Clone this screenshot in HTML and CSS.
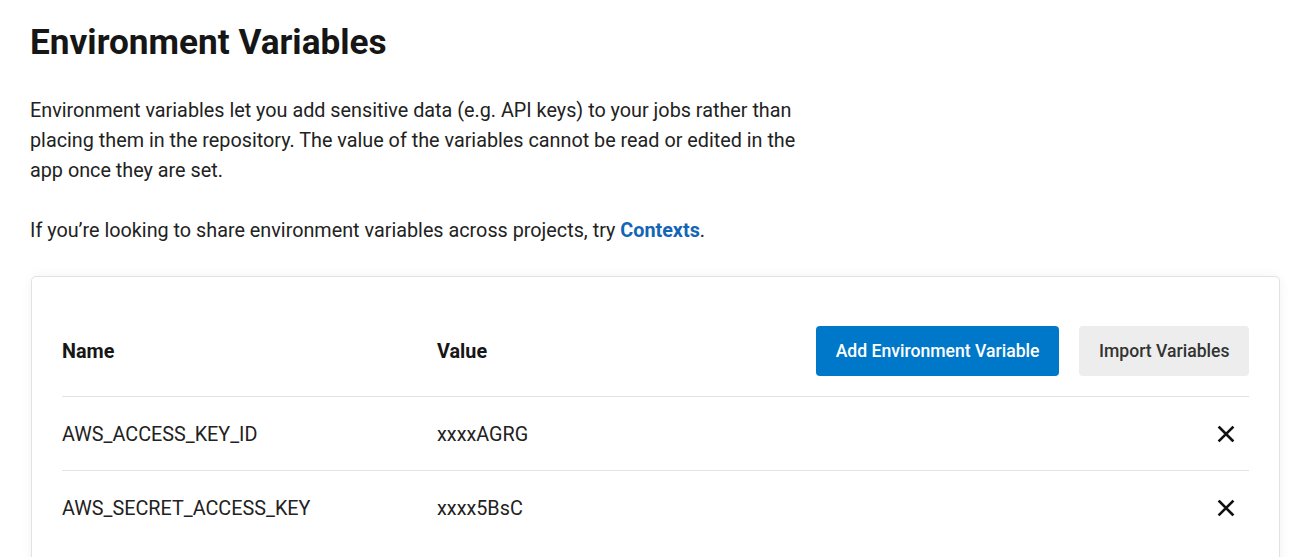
FILE: index.html
```html
<!DOCTYPE html>
<html lang="en">
<head>
<meta charset="utf-8">
<title>Environment Variables</title>
<link rel="stylesheet" href="styles.css">
</head>
<body>
<main class="page">
  <h1 class="title">Environment Variables</h1>
  <p class="intro">Environment variables let you add sensitive data (e.g. API keys) to your jobs rather than placing them in the repository. The value of the variables cannot be read or edited in the app once they are set.</p>
  <p class="intro">If you’re looking to share environment variables across projects, try <a class="link" href="#">Contexts</a>.</p>

  <section class="card">
    <div class="table">
      <div class="row head">
        <div class="cell name">Name</div>
        <div class="cell value">Value</div>
        <div class="cell actions">
          <button class="btn primary">Add Environment Variable</button>
          <button class="btn secondary">Import Variables</button>
        </div>
      </div>
      <div class="row">
        <div class="cell name">AWS_ACCESS_KEY_ID</div>
        <div class="cell value">xxxxAGRG</div>
        <div class="cell actions">
          <button class="remove" aria-label="Delete">
            <svg width="18" height="18" viewBox="0 0 18 18"><path d="M2.5 2.5L15.5 15.5M15.5 2.5L2.5 15.5" stroke="#111" stroke-width="2.6" stroke-linecap="square" fill="none"/></svg>
          </button>
        </div>
      </div>
      <div class="row">
        <div class="cell name">AWS_SECRET_ACCESS_KEY</div>
        <div class="cell value">xxxx5BsC</div>
        <div class="cell actions">
          <button class="remove" aria-label="Delete">
            <svg width="18" height="18" viewBox="0 0 18 18"><path d="M2.5 2.5L15.5 15.5M15.5 2.5L2.5 15.5" stroke="#111" stroke-width="2.6" stroke-linecap="square" fill="none"/></svg>
          </button>
        </div>
      </div>
    </div>
  </section>
</main>
</body>
</html>
```

FILE: styles.css
```css
* { box-sizing: border-box; }
html, body { margin: 0; padding: 0; background: #fff; }
body {
  font-family: Roboto, "Liberation Sans", Arial, sans-serif;
  color: #161616;
}
.page {
  padding: 24px 31px 0 30px;
}
.title {
  margin: 0;
  font-size: 35.2px;
  font-weight: 700;
  line-height: 37px;
  color: #161616;
}
.intro {
  margin: 35px 0 0;
  max-width: 790px;
  font-size: 19.8px;
  line-height: 30px;
  color: #222;
}
.intro + .intro { margin-top: 30px; }
.link {
  color: #1366b3;
  font-weight: 700;
  text-decoration: none;
}
.card {
  margin-top: 30px;
  margin-left: 1px;
  border: 1px solid #e2e2e2;
  border-radius: 5px;
  box-shadow: 0 0 12px rgba(0, 0, 0, 0.05);
  padding: 49px 30px 40px;
  background: #fff;
}
.row {
  display: grid;
  grid-template-columns: 375px 1fr auto;
  align-items: center;
  height: 74px;
  border-top: 1px solid #e3e3e3;
  font-size: 19.8px;
  color: #222;
}
.row .cell.name, .row .cell.value { padding-top: 2px; }
.row.head {
  border-top: none;
  height: 70px;
  align-items: start;
  font-weight: 700;
  color: #161616;
}
.row.head .cell.name, .row.head .cell.value { line-height: 50px; padding-top: 1px; }
.actions {
  display: flex;
  justify-content: flex-end;
  gap: 20px;
}
.btn {
  height: 50px;
  padding: 0 20px;
  border: none;
  border-radius: 4px;
  font-family: Roboto, "Liberation Sans", Arial, sans-serif;
  font-size: 17.6px;
  font-weight: 500;
  cursor: pointer;
}
.btn.primary { background: #0078ca; color: #fff; }
.btn.secondary { background: #ededed; color: #333; padding: 0 19.5px; }
.remove {
  display: flex;
  align-items: center;
  justify-content: center;
  width: 30px;
  height: 30px;
  margin-right: 8px;
  padding: 0;
  border: none;
  background: none;
  cursor: pointer;
}
```
